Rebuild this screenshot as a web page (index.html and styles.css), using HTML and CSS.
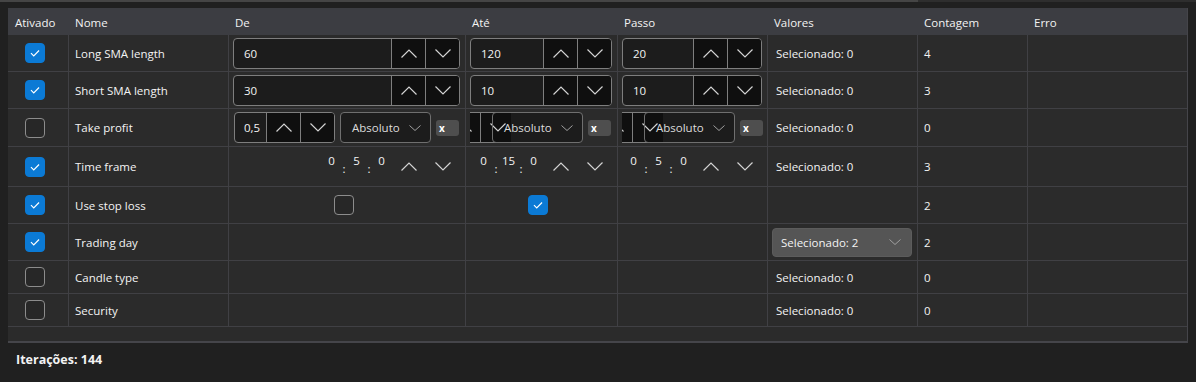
FILE: index.html
```html
<!DOCTYPE html>
<html lang="pt">
<head>
<meta charset="utf-8">
<title>Parâmetros</title>
<link rel="stylesheet" href="styles.css">
</head>
<body>
<div class="topbar"><div class="topbar-thumb"></div></div>
<div class="panel">
  <div class="grid">
    <div class="hd">Ativado</div>
    <div class="hd">Nome</div>
    <div class="hd">De</div>
    <div class="hd">Até</div>
    <div class="hd">Passo</div>
    <div class="hd">Valores</div>
    <div class="hd">Contagem</div>
    <div class="hd">Erro</div>

    <!-- Row 1 -->
    <div class="c first"><div class="cb on"><svg width="20" height="20" viewBox="0 0 20 20"><path d="M5.5 10.2 L8.6 13.2 L14.5 7.2"/></svg></div></div>
    <div class="c">Long SMA length</div>
    <div class="c ctl"><div class="num"><div class="val">60</div><div class="btn"><svg class="chev" width="16" height="9" viewBox="0 0 16 9"><path d="M0.5 8.5 L8 1 L15.5 8.5"/></svg></div><div class="btn"><svg class="chev" width="16" height="9" viewBox="0 0 16 9"><path d="M0.5 0.5 L8 8 L15.5 0.5"/></svg></div></div></div>
    <div class="c ctl"><div class="num"><div class="val">120</div><div class="btn"><svg class="chev" width="16" height="9" viewBox="0 0 16 9"><path d="M0.5 8.5 L8 1 L15.5 8.5"/></svg></div><div class="btn"><svg class="chev" width="16" height="9" viewBox="0 0 16 9"><path d="M0.5 0.5 L8 8 L15.5 0.5"/></svg></div></div></div>
    <div class="c ctl"><div class="num"><div class="val">20</div><div class="btn"><svg class="chev" width="16" height="9" viewBox="0 0 16 9"><path d="M0.5 8.5 L8 1 L15.5 8.5"/></svg></div><div class="btn"><svg class="chev" width="16" height="9" viewBox="0 0 16 9"><path d="M0.5 0.5 L8 8 L15.5 0.5"/></svg></div></div></div>
    <div class="c vals">Selecionado: 0</div>
    <div class="c">4</div>
    <div class="c"></div>

    <!-- Row 2 -->
    <div class="c first"><div class="cb on"><svg width="20" height="20" viewBox="0 0 20 20"><path d="M5.5 10.2 L8.6 13.2 L14.5 7.2"/></svg></div></div>
    <div class="c">Short SMA length</div>
    <div class="c ctl"><div class="num"><div class="val">30</div><div class="btn"><svg class="chev" width="16" height="9" viewBox="0 0 16 9"><path d="M0.5 8.5 L8 1 L15.5 8.5"/></svg></div><div class="btn"><svg class="chev" width="16" height="9" viewBox="0 0 16 9"><path d="M0.5 0.5 L8 8 L15.5 0.5"/></svg></div></div></div>
    <div class="c ctl"><div class="num"><div class="val">10</div><div class="btn"><svg class="chev" width="16" height="9" viewBox="0 0 16 9"><path d="M0.5 8.5 L8 1 L15.5 8.5"/></svg></div><div class="btn"><svg class="chev" width="16" height="9" viewBox="0 0 16 9"><path d="M0.5 0.5 L8 8 L15.5 0.5"/></svg></div></div></div>
    <div class="c ctl"><div class="num"><div class="val">10</div><div class="btn"><svg class="chev" width="16" height="9" viewBox="0 0 16 9"><path d="M0.5 8.5 L8 1 L15.5 8.5"/></svg></div><div class="btn"><svg class="chev" width="16" height="9" viewBox="0 0 16 9"><path d="M0.5 0.5 L8 8 L15.5 0.5"/></svg></div></div></div>
    <div class="c vals">Selecionado: 0</div>
    <div class="c">3</div>
    <div class="c"></div>

    <!-- Row 3 -->
    <div class="c first"><div class="cb"></div></div>
    <div class="c">Take profit</div>
    <div class="c tp">
      <div class="num mini"><div class="val">0,5</div><div class="btn"><svg class="chev" width="16" height="9" viewBox="0 0 16 9"><path d="M0.5 8.5 L8 1 L15.5 8.5"/></svg></div><div class="btn"><svg class="chev" width="16" height="9" viewBox="0 0 16 9"><path d="M0.5 0.5 L8 8 L15.5 0.5"/></svg></div></div>
      <div class="dd"><span>Absoluto</span><svg class="ddchev" width="12" height="6" viewBox="0 0 12 6"><path d="M0.5 0.5 L6 5.5 L11.5 0.5"/></svg></div>
      <div class="xb">x</div>
    </div>
    <div class="c tpc">
      <div class="clip">
        <div class="num mini shifted"><div class="val"></div><div class="btn"><svg class="chev" width="16" height="9" viewBox="0 0 16 9"><path d="M0.5 8.5 L8 1 L15.5 8.5"/></svg></div><div class="btn"><svg class="chev" width="16" height="9" viewBox="0 0 16 9"><path d="M0.5 0.5 L8 8 L15.5 0.5"/></svg></div></div>
        <div class="dd over"><span>Absoluto</span><svg class="ddchev" width="12" height="6" viewBox="0 0 12 6"><path d="M0.5 0.5 L6 5.5 L11.5 0.5"/></svg></div>
      </div>
      <div class="xb">x</div>
    </div>
    <div class="c tpc">
      <div class="clip">
        <div class="num mini shifted"><div class="val"></div><div class="btn"><svg class="chev" width="16" height="9" viewBox="0 0 16 9"><path d="M0.5 8.5 L8 1 L15.5 8.5"/></svg></div><div class="btn"><svg class="chev" width="16" height="9" viewBox="0 0 16 9"><path d="M0.5 0.5 L8 8 L15.5 0.5"/></svg></div></div>
        <div class="dd over"><span>Absoluto</span><svg class="ddchev" width="12" height="6" viewBox="0 0 12 6"><path d="M0.5 0.5 L6 5.5 L11.5 0.5"/></svg></div>
      </div>
      <div class="xb">x</div>
    </div>
    <div class="c vals">Selecionado: 0</div>
    <div class="c">0</div>
    <div class="c"></div>

    <!-- Row 4 -->
    <div class="c first"><div class="cb on"><svg width="20" height="20" viewBox="0 0 20 20"><path d="M5.5 10.2 L8.6 13.2 L14.5 7.2"/></svg></div></div>
    <div class="c">Time frame</div>
    <div class="c ctl"><div class="num plain"><div class="val time"><span class="f">0</span><span class="s">:</span><span class="f">5</span><span class="s">:</span><span class="f">0</span></div><div class="btn"><svg class="chev" width="16" height="9" viewBox="0 0 16 9"><path d="M0.5 8.5 L8 1 L15.5 8.5"/></svg></div><div class="btn"><svg class="chev" width="16" height="9" viewBox="0 0 16 9"><path d="M0.5 0.5 L8 8 L15.5 0.5"/></svg></div></div></div>
    <div class="c ctl"><div class="num plain"><div class="val time"><span class="f">0</span><span class="s">:</span><span class="f">15</span><span class="s">:</span><span class="f">0</span></div><div class="btn"><svg class="chev" width="16" height="9" viewBox="0 0 16 9"><path d="M0.5 8.5 L8 1 L15.5 8.5"/></svg></div><div class="btn"><svg class="chev" width="16" height="9" viewBox="0 0 16 9"><path d="M0.5 0.5 L8 8 L15.5 0.5"/></svg></div></div></div>
    <div class="c ctl"><div class="num plain"><div class="val time"><span class="f">0</span><span class="s">:</span><span class="f">5</span><span class="s">:</span><span class="f">0</span></div><div class="btn"><svg class="chev" width="16" height="9" viewBox="0 0 16 9"><path d="M0.5 8.5 L8 1 L15.5 8.5"/></svg></div><div class="btn"><svg class="chev" width="16" height="9" viewBox="0 0 16 9"><path d="M0.5 0.5 L8 8 L15.5 0.5"/></svg></div></div></div>
    <div class="c vals">Selecionado: 0</div>
    <div class="c">3</div>
    <div class="c"></div>

    <!-- Row 5 -->
    <div class="c first"><div class="cb on"><svg width="20" height="20" viewBox="0 0 20 20"><path d="M5.5 10.2 L8.6 13.2 L14.5 7.2"/></svg></div></div>
    <div class="c">Use stop loss</div>
    <div class="c mid"><div class="cb"></div></div>
    <div class="c mid"><div class="cb on"><svg width="20" height="20" viewBox="0 0 20 20"><path d="M5.5 10.2 L8.6 13.2 L14.5 7.2"/></svg></div></div>
    <div class="c"></div>
    <div class="c vals"></div>
    <div class="c">2</div>
    <div class="c"></div>

    <!-- Row 6 -->
    <div class="c first"><div class="cb on"><svg width="20" height="20" viewBox="0 0 20 20"><path d="M5.5 10.2 L8.6 13.2 L14.5 7.2"/></svg></div></div>
    <div class="c">Trading day</div>
    <div class="c"></div>
    <div class="c"></div>
    <div class="c"></div>
    <div class="c valdd"><div class="combo"><span>Selecionado: 2</span><svg class="ddchev" width="12" height="6" viewBox="0 0 12 6"><path d="M0.5 0.5 L6 5.5 L11.5 0.5"/></svg></div></div>
    <div class="c">2</div>
    <div class="c"></div>

    <!-- Row 7 -->
    <div class="c first"><div class="cb"></div></div>
    <div class="c">Candle type</div>
    <div class="c"></div>
    <div class="c"></div>
    <div class="c"></div>
    <div class="c vals">Selecionado: 0</div>
    <div class="c">0</div>
    <div class="c"></div>

    <!-- Row 8 -->
    <div class="c first"><div class="cb"></div></div>
    <div class="c">Security</div>
    <div class="c"></div>
    <div class="c"></div>
    <div class="c"></div>
    <div class="c vals">Selecionado: 0</div>
    <div class="c">0</div>
    <div class="c"></div>

    <div class="filler"></div>
  </div>
</div>
<div class="footer">Iterações: 144</div>
</body>
</html>
```

FILE: styles.css
```css
* { box-sizing: border-box; margin: 0; padding: 0; }

body {
  background: #202020;
  font-family: "Open Sans", "Noto Sans", sans-serif;
  font-size: 11.5px;
  color: #f3f3f3;
  width: 1196px;
  height: 382px;
  overflow: hidden;
}

.topbar { height: 2px; background: #2e2e2e; display: flex; }
.topbar-thumb { width: 918px; background: #454545; }

.panel {
  margin: 6px 8px 0 8px;
  background: #2b2b2b;
  border-right: 1px solid #45454a;
  border-bottom: 2px solid #45454a;
}

.grid {
  display: grid;
  grid-template-columns: 60px 160px 237px 152px 150px 150px 110px 160px;
  grid-template-rows: 27px 37px 37px 38px 40px 37px 37px 33px 33px 14px;
}

.hd {
  background: #3c3d42;
  padding-left: 7px;
  display: flex;
  align-items: center;
  padding-top: 1px;
}

.c {
  border-left: 1px solid #404044;
  border-bottom: 1px solid #404044;
  display: flex;
  align-items: center;
  padding-left: 6px;
  min-width: 0;
}
.c.first { border-left: 0; padding-left: 17px; }
.c.vals { padding-left: 8px; }
.c.mid { justify-content: center; padding: 0 7px 0 0; }
.filler { grid-column: 1 / -1; }

/* checkbox */
.cb {
  width: 20px; height: 20px;
  border-radius: 4px;
  border: 1px solid #8c8c8c;
  background: #272727;
  flex-shrink: 0;
}
.cb.on {
  background: #0b7ad5;
  border-color: #0b7ad5;
  display: flex; align-items: center; justify-content: center;
}
.cb svg { display: block; }
.cb svg path { fill: none; stroke: #ffffff; stroke-width: 1.3; }

/* numeric up-down */
.c.ctl { padding: 0 5px 0 4px; }
.num {
  display: flex;
  flex: 1;
  height: 31px;
  border: 1px solid #7e7e7e;
  border-radius: 4px;
  background: #1c1c1c;
  overflow: hidden;
}
.num .val {
  flex: 1;
  padding-left: 10px;
  display: flex;
  align-items: center;
  min-width: 0;
}
.num .btn {
  width: 34px;
  flex-shrink: 0;
  border-left: 1px solid #7e7e7e;
  background: #0f0f0f;
  display: flex;
  align-items: center;
  justify-content: center;
}
.chev { display: block; }
.chev path { fill: none; stroke: #d2d2d2; stroke-width: 1.2; }

.num.mini { flex: 0 0 101px; }
.num.mini .val { padding-left: 9px; }

.num.plain { border-color: transparent; background: transparent; }
.num.plain .btn { border-left-color: transparent; background: transparent; }
.val.time {
  padding-left: 0;
  justify-content: flex-end;
  align-items: flex-start;
}
.time .f { width: 19px; text-align: center; line-height: 16px; margin-top: 1px; }
.time .s { width: 6px; text-align: center; line-height: 16px; margin-top: 9px; }

/* take profit row */
.c.tp { padding-left: 5px; gap: 5px; }
.c.tpc { padding-left: 4px; gap: 5px; }
.clip {
  display: flex;
  align-items: center;
  overflow: hidden;
  width: 113px;
  flex-shrink: 0;
}
.num.shifted { margin-left: -56px; }

.dd {
  flex: 0 0 91px;
  height: 31px;
  border: 1px solid #6f6f6f;
  border-radius: 4px;
  background: #1c1c1c;
  display: flex;
  align-items: center;
  justify-content: space-between;
  padding: 0 9px 0 11px;
  color: #dcdcdc;
}
.dd.over {
  margin-left: -23px;
  position: relative;
  background: linear-gradient(to right, transparent 0, transparent 18px, #1c1c1c 18px);
}
.ddchev { display: block; flex-shrink: 0; }
.ddchev path { fill: none; stroke: #a0a0a0; stroke-width: 1; }

.xb {
  flex: 0 0 23px;
  height: 16px;
  border-radius: 3px;
  background: #4e4e4e;
  font-size: 10px;
  font-weight: 700;
  line-height: 16px;
  padding-left: 3px;
  color: #ffffff;
}

/* valores combo */
.c.valdd { padding-left: 4px; }
.combo {
  width: 140px;
  height: 29px;
  border-radius: 4px;
  background: #555555;
  border: 1px solid #5c5c5c;
  display: flex;
  align-items: center;
  justify-content: space-between;
  padding: 0 10px 0 8px;
}

.footer {
  padding: 8px 0 0 16px;
  font-size: 12.5px;
  font-weight: 700;
  line-height: 18px;
  color: #f3f3f3;
}
```
